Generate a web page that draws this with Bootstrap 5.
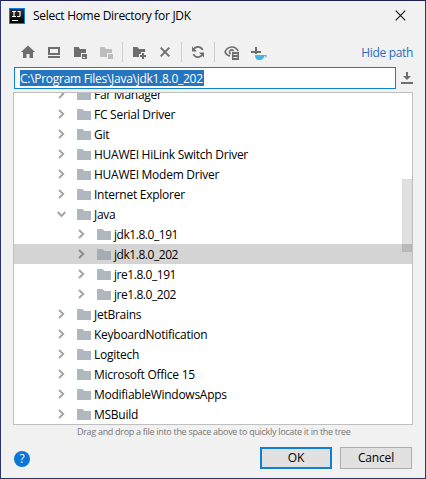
<!DOCTYPE html>
<html lang="en">
<head>
<meta charset="utf-8">
<meta name="viewport" content="width=device-width, initial-scale=1">
<title>Select Home Directory for JDK</title>
<link href="https://cdn.jsdelivr.net/npm/bootstrap@5.3.0/dist/css/bootstrap.min.css" rel="stylesheet">
<style>
body{font-family:"Open Sans","Noto Sans",sans-serif;font-size:12px;line-height:20px;color:#000;background:#f0f0f0;letter-spacing:-.32px}
.dialog{width:426px;height:479px;border:1px solid #2b356b;border-top-color:#1d2050;background:#f1f1f1}
svg{display:block;flex:none}
.titlebar{height:36px;padding:7px 19px 0 8px}
.caption-text{margin:-2px 0 0 8px;letter-spacing:-.3px}
.tools{height:30px;padding:0 12px 0 19px;gap:10px}
.tools svg{color:#6e6e6e;margin-top:7px}
.tools .off{color:#bdbdbd}
.sep{width:1px;height:20px;background:#cdcdcd;margin:5px -2px 0}
.hide{color:#2470c0;margin-top:6px;letter-spacing:-.32px;text-decoration:none}
.pathrow{padding:0 12px 0 13px;height:22px}
.path{width:382px;height:22px;border:1px solid #0f80d8;background:#fff;padding:2px 5px}
.path span{display:block;background:#2675bf;color:#fff;height:16px;line-height:17px;width:184px;white-space:nowrap;letter-spacing:-.28px}
.tree{margin:3px 12px 0 12px;height:333px;border:1px solid #bfbfbf;background:#fff}
.rows{margin-top:-9px}
.item{height:20px;padding-left:44px;white-space:nowrap;letter-spacing:-.26px}
.item span{padding-top:2px}
.item.sub{padding-left:64px;letter-spacing:-.45px}
.item.on{background:#d4d4d4}
.item svg{margin-right:12px;color:#a5a5a5}
.item svg + svg{margin-right:3px;color:#afb8be}
.item.on svg{color:#8b8b8b}
.item.on svg + svg{color:#a3adb3}
.thumb{right:0;top:86px;width:10px;height:73px;background:rgba(0,0,0,.12);border:1px solid rgba(0,0,0,.02)}
.hint{font-size:9px;line-height:14px;color:#777;padding-left:76px;letter-spacing:-.3px;height:22px}
.foot{padding:0 13px 0 13px}
.dlgbtn{width:72px;height:22px;border:1px solid #adadad;border-radius:0;background:#e1e1e1;font-size:12px;line-height:18px;padding:0;color:#000;letter-spacing:-.15px}
.dlgbtn.main{border:2px solid #0f80d8;line-height:16px}
.help{width:16px;height:16px;background:#0878d8;color:#fff;font-size:12px;line-height:16px;margin-top:4px}
</style>
</head>
<body>
<svg width="0" height="0" class="position-absolute">
<symbol id="right" viewBox="0 0 7 10"><path d="M1 1l4.2 4L1 9" fill="none" stroke="currentColor" stroke-width="2"/></symbol>
<symbol id="down" viewBox="0 0 9 7"><path d="M.7 1l3.8 4 3.8-4" fill="none" stroke="currentColor" stroke-width="2"/></symbol>
<symbol id="folder" viewBox="0 0 14 11"><path d="M0 0h5.5L7.5 2H14v9H0z" fill="currentColor"/></symbol>
</svg>
<main class="dialog d-flex flex-column overflow-hidden">
<header class="titlebar d-flex align-items-start">
<svg width="16" height="16" viewBox="0 0 16 16"><defs><linearGradient id="g" x2="0" y2="1"><stop stop-color="#333"/><stop offset="1"/></linearGradient></defs><path d="M0 0h16v16H0z" fill="#0f7ee0"/><path d="M1 1h14v14H1z" fill="url(#g)"/><path d="M3 3.5h4M5 3.5v5M3 8.5h4M8.5 3.5h2.5v4.2q0 .8-.8.8H8M3 12.5h6" fill="none" stroke="#fff" stroke-width="1.2"/></svg>
<div class="caption-text">Select Home Directory for JDK</div>
<svg class="ms-auto" style="margin-top:2px" width="11" height="11" viewBox="0 0 11 11"><path d="M.7.7l9.6 9.6M10.3.7L.7 10.3" stroke="#111" stroke-width="1.1"/></svg>
</header>
<div class="tools d-flex align-items-start">
<svg width="16" height="16" viewBox="0 0 16 16" fill="currentColor"><path d="M8 1.5l7 6.5h-2v6H9.5v-4h-3v4H3V8H1z"/></svg>
<svg width="16" height="16" viewBox="0 0 16 16" fill="currentColor"><path d="M2 3h12v8H2zM4 5v4h8V5zM2 12h12v2H2z" fill-rule="evenodd"/></svg>
<svg width="16" height="16" viewBox="0 0 16 16" fill="currentColor"><path d="M2 3h4.5L8 5h6v4H9v4H2zM10 10h5v5h-5zM11 13v1h2v-1z" fill-rule="evenodd"/></svg>
<svg class="off" width="16" height="16" viewBox="0 0 16 16" fill="currentColor"><path d="M2 3h4.5L8 5h6v4H9v4H2zM10 10h5v5h-5z"/></svg>
<i class="sep"></i>
<svg width="16" height="16" viewBox="0 0 16 16" fill="currentColor"><path d="M2 3h4.5L8 5h6v3h-4v2H8v3H2zM11 9h2v2h2v2h-2v2h-2v-2H9v-2h2z"/></svg>
<svg width="16" height="16" viewBox="0 0 16 16"><path d="M3.7 3.7l8.6 8.6M12.3 3.7l-8.6 8.6" stroke="currentColor" stroke-width="1.9"/></svg>
<i class="sep"></i>
<svg width="16" height="16" viewBox="0 0 16 16"><path d="M3.3 6.2A5 5 0 0 1 12.6 6M12.7 9.8A5 5 0 0 1 3.4 10" fill="none" stroke="currentColor" stroke-width="1.8"/><path d="M2 2.5v5h5zM14 13.5v-5H9z" fill="currentColor"/></svg>
<i class="sep"></i>
<svg class="ms-0" width="17" height="16" viewBox="-1 0 17 16"><path d="M6 12C3.5 11.5 1.8 9.8 1 8 3.8 1.5 11.6 1.5 14 7" fill="none" stroke="currentColor" stroke-width="1.7"/><path d="M6.6 10A2.2 2.2 0 1 1 9.6 7" fill="none" stroke="currentColor" stroke-width="1.6"/><path d="M8 8h7v8H8zM9.5 10v1h4v-1zM9.5 13v1h4v-1z" fill="currentColor" fill-rule="evenodd"/></svg>
<svg width="17" height="16" viewBox="0 0 17 16"><path d="M1 8h10M6 3v7" stroke="currentColor" stroke-width="2"/><path d="M5 11h11.5v2.3H14Q13 16 11 16H8Q5 15.5 5 11zM14 12v.8h1.5V12z" fill="#40b6e0" fill-rule="evenodd"/></svg>
<a class="hide ms-auto" href="#">Hide path</a>
</div>
<div class="pathrow d-flex justify-content-between align-items-start">
<div class="path"><span>C:\Program Files\Java\jdk1.8.0_202</span></div>
<svg class="mt-1" width="12" height="13" viewBox="0 0 12 13"><path d="M5 1h2v4h3L6 9 2 5h3zM0 11h12v2H0z" fill="#6e6e6e"/></svg>
</div>
<section class="tree position-relative overflow-hidden">
<div class="rows">
<div class="item d-flex align-items-center"><svg width="7" height="10"><use href="#right"/></svg><svg width="14" height="11"><use href="#folder"/></svg><span>Far Manager</span></div>
<div class="item d-flex align-items-center"><svg width="7" height="10"><use href="#right"/></svg><svg width="14" height="11"><use href="#folder"/></svg><span>FC Serial Driver</span></div>
<div class="item d-flex align-items-center"><svg width="7" height="10"><use href="#right"/></svg><svg width="14" height="11"><use href="#folder"/></svg><span>Git</span></div>
<div class="item d-flex align-items-center"><svg width="7" height="10"><use href="#right"/></svg><svg width="14" height="11"><use href="#folder"/></svg><span>HUAWEI HiLink Switch Driver</span></div>
<div class="item d-flex align-items-center"><svg width="7" height="10"><use href="#right"/></svg><svg width="14" height="11"><use href="#folder"/></svg><span>HUAWEI Modem Driver</span></div>
<div class="item d-flex align-items-center"><svg width="7" height="10"><use href="#right"/></svg><svg width="14" height="11"><use href="#folder"/></svg><span>Internet Explorer</span></div>
<div class="item d-flex align-items-center"><svg width="9" height="7" style="margin-left:-1px;margin-right:11px"><use href="#down"/></svg><svg width="14" height="11"><use href="#folder"/></svg><span>Java</span></div>
<div class="item sub d-flex align-items-center"><svg width="7" height="10"><use href="#right"/></svg><svg width="14" height="11"><use href="#folder"/></svg><span>jdk1.8.0_191</span></div>
<div class="item sub on d-flex align-items-center"><svg width="7" height="10"><use href="#right"/></svg><svg width="14" height="11"><use href="#folder"/></svg><span>jdk1.8.0_202</span></div>
<div class="item sub d-flex align-items-center"><svg width="7" height="10"><use href="#right"/></svg><svg width="14" height="11"><use href="#folder"/></svg><span>jre1.8.0_191</span></div>
<div class="item sub d-flex align-items-center"><svg width="7" height="10"><use href="#right"/></svg><svg width="14" height="11"><use href="#folder"/></svg><span>jre1.8.0_202</span></div>
<div class="item d-flex align-items-center"><svg width="7" height="10"><use href="#right"/></svg><svg width="14" height="11"><use href="#folder"/></svg><span>JetBrains</span></div>
<div class="item d-flex align-items-center"><svg width="7" height="10"><use href="#right"/></svg><svg width="14" height="11"><use href="#folder"/></svg><span>KeyboardNotification</span></div>
<div class="item d-flex align-items-center"><svg width="7" height="10"><use href="#right"/></svg><svg width="14" height="11"><use href="#folder"/></svg><span>Logitech</span></div>
<div class="item d-flex align-items-center"><svg width="7" height="10"><use href="#right"/></svg><svg width="14" height="11"><use href="#folder"/></svg><span>Microsoft Office 15</span></div>
<div class="item d-flex align-items-center"><svg width="7" height="10"><use href="#right"/></svg><svg width="14" height="11"><use href="#folder"/></svg><span>ModifiableWindowsApps</span></div>
<div class="item d-flex align-items-center"><svg width="7" height="10"><use href="#right"/></svg><svg width="14" height="11"><use href="#folder"/></svg><span>MSBuild</span></div>
</div>
<div class="thumb position-absolute"></div>
</section>
<div class="hint">Drag and drop a file into the space above to quickly locate it in the tree</div>
<footer class="foot d-flex align-items-start">
<div class="help rounded-circle text-center me-auto">?</div>
<button type="button" class="btn dlgbtn main me-2">OK</button>
<button type="button" class="btn dlgbtn">Cancel</button>
</footer>
</main>
<script src="https://cdn.jsdelivr.net/npm/bootstrap@5.3.0/dist/js/bootstrap.bundle.min.js"></script>
</body>
</html>
